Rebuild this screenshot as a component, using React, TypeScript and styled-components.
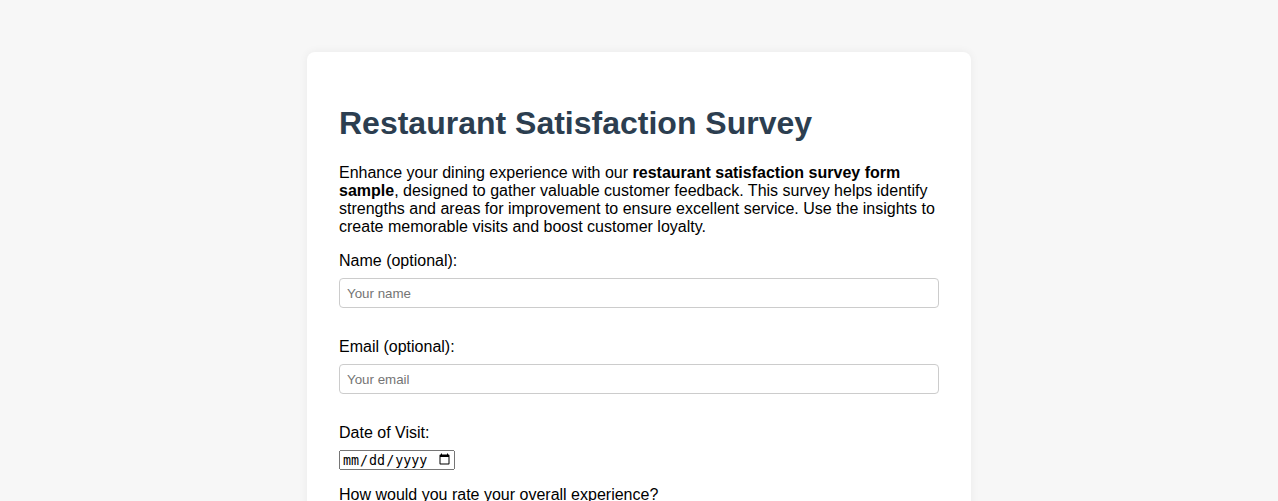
import React from 'react';
import styled, { createGlobalStyle } from 'styled-components';

const GlobalStyle = createGlobalStyle`
  body {
    margin: 0;
    background: #f7f7f7;
    font-family: 'Liberation Sans', Arial, sans-serif;
    color: #000;
  }
`;

const Page = styled.div`
  padding: 52px 20px 40px;
`;

const Card = styled.div`
  max-width: 600px;
  margin: 0 auto;
  padding: 32px;
  background: #fff;
  border-radius: 8px;
  box-shadow: 0 0 10px rgba(0, 0, 0, 0.06);
`;

const Title = styled.h1`
  font-size: 32px;
  line-height: 37px;
  margin: 21px 0 22px;
  color: #2c3e50;
  font-weight: bold;
`;

const Intro = styled.p`
  font-size: 16px;
  line-height: 18px;
  margin: 0 0 16px;
`;

const Field = styled.div<{ $gap?: number }>`
  margin-bottom: ${p => p.$gap ?? 30}px;
`;

const Label = styled.label`
  display: block;
  font-size: 16px;
  line-height: 18px;
  margin-bottom: 8px;
`;

const TextInput = styled.input`
  box-sizing: border-box;
  display: block;
  width: 100%;
  height: 30px;
  padding: 6px 7px;
  border: 1px solid #ccc;
  border-radius: 4px;
  font-family: 'Liberation Sans', Arial, sans-serif;
  font-size: 13.333px;

  &::placeholder {
    color: #757575;
  }
`;

const DateInput = styled.input`
  box-sizing: border-box;
  display: block;
  width: 116px;
  height: 20px;
  margin: 0;
  font-size: 13.333px;
`;

export default function App() {
  return (
    <>
      <GlobalStyle />
      <Page>
        <Card>
          <Title>Restaurant Satisfaction Survey</Title>
          <Intro>
            Enhance your dining experience with our{' '}
            <strong>restaurant satisfaction survey form sample</strong>, designed to gather
            valuable customer feedback. This survey helps identify strengths and areas for
            improvement to ensure excellent service. Use the insights to create memorable
            visits and boost customer loyalty.
          </Intro>
          <Field>
            <Label htmlFor="name">Name (optional):</Label>
            <TextInput id="name" type="text" placeholder="Your name" />
          </Field>
          <Field>
            <Label htmlFor="email">Email (optional):</Label>
            <TextInput id="email" type="email" placeholder="Your email" />
          </Field>
          <Field $gap={16}>
            <Label htmlFor="date">Date of Visit:</Label>
            <DateInput id="date" type="date" />
          </Field>
          <Field>
            <Label>How would you rate your overall experience?</Label>
          </Field>
        </Card>
      </Page>
    </>
  );
}
